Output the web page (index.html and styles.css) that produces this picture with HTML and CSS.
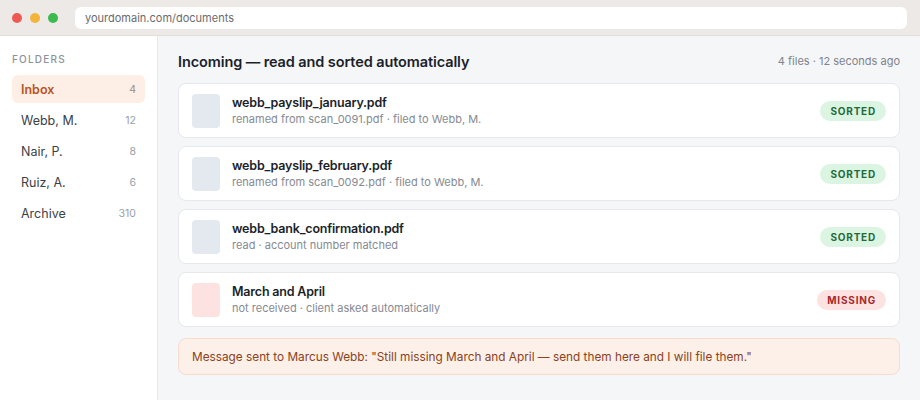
FILE: index.html
```html
<!DOCTYPE html>
<html>
<head>
<meta charset="utf-8">
<link rel="stylesheet" href="styles.css">
</head>
<body>
<div class="window">
  <div class="chrome">
    <div class="dots">
      <span class="dot red"></span><span class="dot yellow"></span><span class="dot green"></span>
    </div>
    <div class="url">yourdomain.com/documents</div>
  </div>
  <div class="app">
    <aside class="sidebar">
      <div class="side-label">FOLDERS</div>
      <ul class="folders">
        <li class="folder active"><span>Inbox</span><span class="count">4</span></li>
        <li class="folder"><span>Webb, M.</span><span class="count">12</span></li>
        <li class="folder"><span>Nair, P.</span><span class="count">8</span></li>
        <li class="folder"><span>Ruiz, A.</span><span class="count">6</span></li>
        <li class="folder"><span>Archive</span><span class="count">310</span></li>
      </ul>
    </aside>
    <main class="main">
      <div class="head">
        <h1>Incoming — read and sorted automatically</h1>
        <span class="meta">4 files · 12 seconds ago</span>
      </div>
      <div class="list">
        <div class="card">
          <div class="thumb"></div>
          <div class="info">
            <div class="title">webb_payslip_january.pdf</div>
            <div class="sub">renamed from scan_0091.pdf · filed to Webb, M.</div>
          </div>
          <span class="badge ok">SORTED</span>
        </div>
        <div class="card">
          <div class="thumb"></div>
          <div class="info">
            <div class="title">webb_payslip_february.pdf</div>
            <div class="sub">renamed from scan_0092.pdf · filed to Webb, M.</div>
          </div>
          <span class="badge ok">SORTED</span>
        </div>
        <div class="card">
          <div class="thumb"></div>
          <div class="info">
            <div class="title">webb_bank_confirmation.pdf</div>
            <div class="sub">read · account number matched</div>
          </div>
          <span class="badge ok">SORTED</span>
        </div>
        <div class="card">
          <div class="thumb missing"></div>
          <div class="info">
            <div class="title">March and April</div>
            <div class="sub">not received · client asked automatically</div>
          </div>
          <span class="badge miss">MISSING</span>
        </div>
      </div>
      <div class="notice">Message sent to Marcus Webb: "Still missing March and April — send them here and I will file them."</div>
    </main>
  </div>
</div>
</body>
</html>
```
FILE: styles.css
```css
* { box-sizing: border-box; }
html, body { margin: 0; padding: 0; }
body {
  width: 920px;
  height: 400px;
  overflow: hidden;
  font-family: Inter, "Noto Sans", sans-serif;
  background: #f5f6f8;
  color: #1b1f2a;
}
.window { display: flex; flex-direction: column; height: 400px; }
.chrome {
  height: 36px;
  background: #ece9e6;
  border-bottom: 1px solid #e2dfdb;
  display: flex;
  align-items: center;
  padding: 0 12px;
  flex-shrink: 0;
}
.dots { display: flex; gap: 8px; margin-right: 17px; }
.dot { width: 10px; height: 10px; border-radius: 50%; display: block; }
.red { background: #ec5a52; }
.yellow { background: #f2b53a; }
.green { background: #3cb94f; }
.url {
  flex: 1;
  height: 22px;
  background: #fff;
  border-radius: 6px;
  margin-right: 1px;
  font-size: 11px;
  color: #6b6b6b;
  display: flex;
  align-items: center;
  padding-left: 10px;
}
.app { flex: 1; display: flex; }
.sidebar {
  width: 158px;
  background: #fff;
  border-right: 1px solid #e8e8ea;
  padding: 17px 12px 0;
  flex-shrink: 0;
}
.side-label {
  font-size: 10px;
  letter-spacing: 1.2px;
  color: #8d929b;
  font-weight: 500;
  margin-bottom: 10px;
}
.folders { list-style: none; margin: 0; padding: 0; display: flex; flex-direction: column; gap: 3px; }
.folder {
  height: 28px;
  display: flex;
  align-items: center;
  justify-content: space-between;
  padding: 0 9px;
  font-size: 12.5px;
  color: #3b3f48;
  border-radius: 6px;
}
.folder .count { font-size: 10.5px; color: #9aa0a8; }
.folder.active { background: #fdeee6; color: #b9531f; font-weight: 600; }
.folder.active .count { color: #9a8d86; font-weight: 400; }
.main { flex: 1; padding: 14px 20px 0 20px; display: flex; flex-direction: column; }
.head { display: flex; justify-content: space-between; align-items: center; height: 22px; margin-bottom: 11px; }
.head h1 { margin: 0; font-size: 14.5px; font-weight: 600; color: #1b1f2a; letter-spacing: -0.1px; }
.meta { font-size: 11px; color: #7f848c; }
.list { display: flex; flex-direction: column; gap: 8px; }
.card {
  height: 55px;
  background: #fff;
  border: 1px solid #e6e8ec;
  border-radius: 8px;
  display: flex;
  align-items: center;
  padding: 0 13px;
}
.thumb { width: 28px; height: 34px; border-radius: 4px; background: #e4e8ef; flex-shrink: 0; margin-right: 12px; }
.thumb.missing { background: #fde2e2; }
.info { flex: 1; display: flex; flex-direction: column; gap: 2px; }
.title { font-size: 12.5px; font-weight: 600; color: #1b1f2a; letter-spacing: -0.2px; }
.sub { font-size: 11px; color: #858a92; }
.badge {
  height: 20px;
  border-radius: 10px;
  padding: 0 10px;
  font-size: 10px;
  font-weight: 700;
  letter-spacing: 0.8px;
  display: flex;
  align-items: center;
}
.badge.ok { background: #dcf5e3; color: #1e6b3a; }
.badge.miss { background: #fde2e2; color: #a8282a; }
.notice {
  margin-top: 11px;
  height: 37px;
  background: #fdf0e9;
  border: 1px solid #f7dccd;
  border-radius: 8px;
  display: flex;
  align-items: center;
  padding: 0 13px;
  font-size: 11.8px;
  color: #8a4220;
}
```
